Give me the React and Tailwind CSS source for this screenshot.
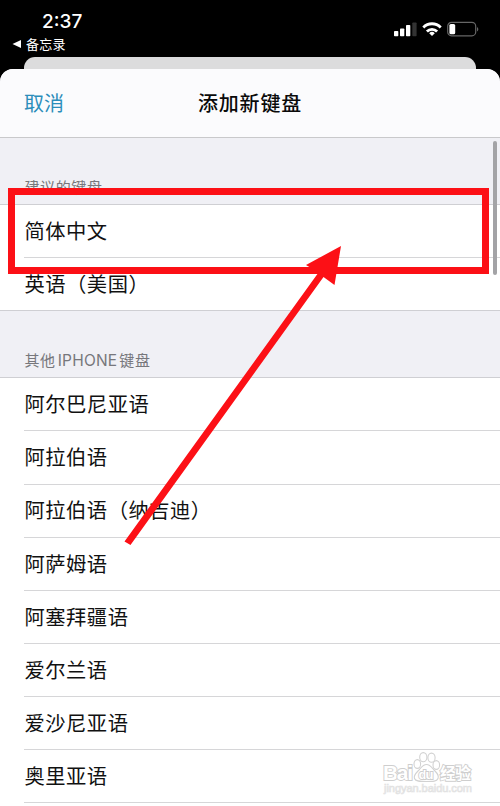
const suggested = ['简体中文', '英语（美国）'];

const others = [
  '阿尔巴尼亚语',
  '阿拉伯语',
  '阿拉伯语（纳吉迪）',
  '阿萨姆语',
  '阿塞拜疆语',
  '爱尔兰语',
  '爱沙尼亚语',
  '奥里亚语',
];

function StatusBar() {
  return (
    <div className="h-[57px] flex justify-between text-white">
      <div className="pl-[12px] pt-[9px]">
        <div className="pl-[30px] h-[25px] leading-[25px] text-[19px] font-medium font-['Inter','Liberation_Sans',sans-serif]">2:37</div>
        <div className="flex items-center gap-[5px] h-[20px] text-[13px]">
          <svg width="9" height="8" viewBox="0 0 9 8" fill="currentColor">
            <path d="M0.5 4 9 0v8z" />
          </svg>
          <span className="tracking-[0.3px]">备忘录</span>
        </div>
      </div>
      <div className="flex items-start gap-[5px] pt-[21px] pr-[21px]">
        {/* Signal */}
        <svg width="23" height="16" viewBox="0 0 23 16" fill="#fff">
          <rect x="0" y="10" width="4.3" height="5.3" rx="0.8" />
          <rect x="6" y="7.5" width="4.3" height="7.8" rx="0.8" />
          <rect x="12" y="4" width="4.3" height="11.3" rx="0.8" />
          <rect x="18.3" y="1.5" width="4.3" height="13.8" rx="0.8" fill="#333" />
        </svg>
        {/* Wifi */}
        <svg width="20" height="16" viewBox="0 0 20 16" fill="none" stroke="#fff" strokeWidth="2.8">
          <path d="M1.3 6.4a12.2 12.2 0 0 1 17.4 0" />
          <path d="M4.9 10.4a7.2 7.2 0 0 1 10.2 0" />
          <path d="M10 15 7.2 12.2a4 4 0 0 1 5.6 0z" fill="#fff" stroke="none" />
        </svg>
        {/* Battery */}
        <svg width="32" height="16" viewBox="0 0 32 16">
          <rect x="0.7" y="1.4" width="28" height="13.4" rx="3.8" fill="none" stroke="#666" strokeWidth="1.2" />
          <rect x="2.4" y="3" width="5.8" height="10.2" rx="1.5" fill="#fff" />
          <path d="M30 6v4.4c1.8-.8 1.8-3.6 0-4.4z" fill="#666" />
        </svg>
      </div>
    </div>
  );
}

function SectionTitle({ children }) {
  return (
    <div className="h-[67px] shrink-0 flex items-end pl-[24.5px] pb-[6px] border-b border-[#cfcfd3] text-[15px] leading-[22px] tracking-[0.6px] text-[#77777c]">
      {children}
    </div>
  );
}

function Row({ label, last }) {
  return (
    <li className="h-[53.15px] shrink-0 pl-[24px] bg-white">
      <div className={`h-full flex items-center pl-[0.5px] pb-[2px] text-[20.3px] tracking-[0.5px] text-[#111] ${last ? '' : 'border-b border-[#d6d6d8]'}`}>
        {label}
      </div>
    </li>
  );
}

function Watermark() {
  return (
    <svg className="absolute left-[380px] top-[748px]" width="98" height="50" viewBox="0 0 98 50">
      <g fill="#fff" stroke="#d2d2d2" strokeWidth="1.1">
        <ellipse cx="37.3" cy="16" rx="3.3" ry="4.4" />
        <ellipse cx="43.3" cy="9.2" rx="3.6" ry="4.6" />
        <ellipse cx="51.5" cy="9.7" rx="3.6" ry="4.6" />
        <ellipse cx="56.3" cy="17" rx="3.3" ry="4.4" />
        <path d="M46.5 16.5c4 0 5.5 3.500 8.500 6.500s4 5 3 7.500c-1.200 3-5 3-11.500 3s-11 0-12-3c-1-2.500.5-4.500 3.500-7.500s4.500-6.500 8.500-6.500z" />
      </g>
      <g fill="#fff" stroke="#cecece" strokeWidth="1.8" paintOrder="stroke" fontWeight="700" fontFamily="Liberation Sans, sans-serif">
        <text x="3" y="32" fontSize="21" textLength="30">Bai</text>
        <text x="38.5" y="31" fontSize="13" textLength="15">du</text>
        <text x="60" y="31" fontSize="16" textLength="31" fontFamily="Noto Sans CJK SC, sans-serif">经验</text>
      </g>
      <text x="4" y="44" fontSize="11" textLength="88" fill="#f6f6f6" stroke="#e2e2e2" strokeWidth="0.7" fontFamily="Liberation Sans, sans-serif">jingyan.baidu.com</text>
    </svg>
  );
}

export default function App() {
  return (
    <div className="relative w-[500px] h-[806px] overflow-hidden bg-black flex flex-col font-['Noto_Sans_CJK_SC',sans-serif]">
      <StatusBar />
      <div className="h-[12px] shrink-0 mx-[24px] rounded-t-[11px] bg-[#dcdcdd]" />

      <div className="flex-1 min-h-0 flex flex-col overflow-hidden rounded-t-[13px] bg-[#f0f0f5]">
        <header className="h-[69px] shrink-0 grid grid-cols-[1fr_auto_1fr] items-center px-[24px] bg-[#fbfbfd] border-b border-[#c9c9cb]">
          <button className="text-left text-[20px] text-[#2b8dba]">取消</button>
          <h1 className="text-[20px] font-medium tracking-[0.8px] text-[#0a0a0a]">添加新键盘</h1>
        </header>

        <SectionTitle>建议的键盘</SectionTitle>
        <ul className="shrink-0">
          {suggested.map((name, i) => (
            <Row key={name} label={name} last={i === suggested.length - 1} />
          ))}
        </ul>
        <div className="shrink-0 -mt-px border-t border-[#cfcfd3]">
          <SectionTitle>
            其他<span className="font-['Inter',sans-serif] text-[15.5px] tracking-[0.2px] mx-[2px] -mb-[0.5px]">IPHONE</span>键盘
          </SectionTitle>
        </div>
        <ul className="shrink-0 bg-white">
          {others.map((name) => (
            <Row key={name} label={name} />
          ))}
          <li className="h-[20px] bg-white" />
        </ul>
      </div>

      {/* Scroll indicator */}
      <div className="absolute left-[493px] top-[141px] w-[4px] h-[134px] rounded-full bg-[#a3a3a6]" />

      <Watermark />

      {/* Highlight box and arrow */}
      <div className="absolute left-[8px] top-[188px] w-[481px] h-[86px] border-[7px] border-[#fc1016]" />
      <svg className="absolute left-0 top-0" width="500" height="806" viewBox="0 0 500 806" fill="#fc1016">
        <path d="M124.5 541.5 318.5 272.5 306 265 341 246 334.5 285 323.5 277 130.5 545z" />
      </svg>
    </div>
  );
}
